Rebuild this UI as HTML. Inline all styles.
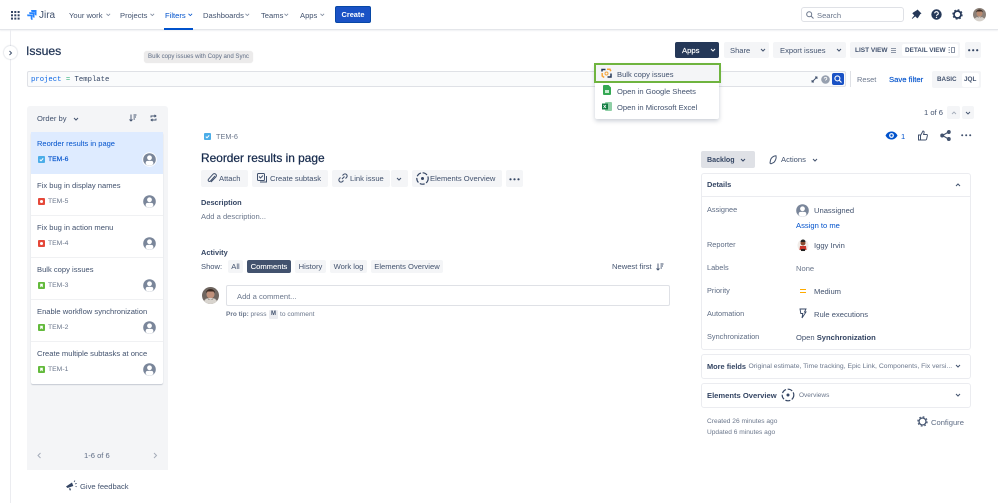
<!DOCTYPE html>
<html><head><meta charset="utf-8"><style>
*{box-sizing:border-box}
html,body{margin:0;padding:0;width:998px;height:503px;overflow:hidden;background:#fff;font-family:"Liberation Sans",sans-serif;color:#42526e;font-size:7.6px}
.t,.b{position:absolute;white-space:nowrap}
.t{line-height:12px;height:12px;margin-top:.7px}
.b{background:#f4f5f7;border-radius:2px}
svg{position:absolute;overflow:visible}
.nav{color:#42526e;font-size:7.6px}
.dk{color:#172b4d}.bl{color:#0052cc}.gr{color:#6b778c}.bd{font-weight:bold;font-size:7.4px}
.lb{font-size:7.35px;color:#5e6c84}
.tm{font-size:6.8px;color:#6b778c}
</style></head><body>
<!-- top nav -->
<div style="position:absolute;left:0;top:0;width:998px;height:30px;border-bottom:1px solid #e4e6ea;box-shadow:0 1px 1px rgba(9,30,66,.06)"></div>
<svg style="left:11px;top:11px" width="9" height="9" fill="#344563"><rect x="0" y="0" width="2" height="2"/><rect x="3.300" y="0" width="2" height="2"/><rect x="6.600" y="0" width="2" height="2"/><rect x="0" y="3.300" width="2" height="2"/><rect x="3.300" y="3.300" width="2" height="2"/><rect x="6.600" y="3.300" width="2" height="2"/><rect x="0" y="6.600" width="2" height="2"/><rect x="3.300" y="6.600" width="2" height="2"/><rect x="6.600" y="6.600" width="2" height="2"/></svg>
<svg style="left:27px;top:10px" width="10" height="10" fill="#2684ff"><path d="M4 0h5.500v5.500a1.800 1.800 0 0 1-1.800-1.600V2H4.500z"/><path d="M2 2.200h5.500v5.500a1.800 1.800 0 0 1-1.800-1.600V4H2.500z"/><path d="M0 4.500h5.500V10a1.800 1.800 0 0 1-1.800-1.600V6.300H.5z"/></svg>
<div class="t" style="left:39px;top:8px;font-size:10px;line-height:13px;color:#42526e">Jira</div>
<div class="t nav" style="left:69px;top:9px">Your work</div>
<div class="t nav" style="left:120px;top:9px">Projects</div>
<div class="t nav bl" style="left:165px;top:9px;color:#0052cc">Filters</div>
<div class="t nav" style="left:203px;top:9px">Dashboards</div>
<div class="t nav" style="left:261px;top:9px">Teams</div>
<div class="t nav" style="left:300px;top:9px">Apps</div>
<svg style="left:0;top:0" width="998" height="30" fill="none" stroke="#7a869a" stroke-width=".8"><path d="M106.500 13.800l1.800 1.800 1.800-1.800M150.500 13.800l1.800 1.800 1.800-1.800"/><path stroke="#0052cc" d="M188.500 13.800l1.800 1.800 1.800-1.800"/><path d="M245.500 13.800l1.800 1.800 1.800-1.800M284.500 13.800l1.800 1.800 1.800-1.800M320.500 13.800l1.800 1.800 1.800-1.800"/></svg>
<div style="position:absolute;left:164px;top:28px;width:29px;height:1.500px;background:#0052cc"></div>
<div style="position:absolute;left:335px;top:6px;width:36px;height:17px;background:#1a52c5;border:1px solid #0747a6;border-radius:2px;color:#fff;font-size:7.400px;font-weight:bold;text-align:center;line-height:15px">Create</div>
<div style="position:absolute;left:801px;top:7px;width:103px;height:15px;border:1px solid #dfe1e6;border-radius:3px"></div>
<svg style="left:806px;top:11px" width="8" height="8" fill="none" stroke="#6b778c" stroke-width="1"><circle cx="3.200" cy="3.200" r="2.500"/><path d="M5 5l2.500 2.500"/></svg>
<div class="t gr" style="left:817px;top:9px">Search</div>
<svg style="left:911px;top:9px" width="11" height="11" fill="#253858"><path d="M6.500 0.500l4 4-1.200.6-2 3.300-1 1-2-2-3 2.500-.5-.5 2.500-3-2-2 1-1 3.300-2z"/></svg>
<svg style="left:931px;top:9px" width="11" height="11"><circle cx="5.500" cy="5.500" r="5.200" fill="#253858"/><path d="M3.700 4.300a1.800 1.600 0 1 1 2.600 1.400c-.6.300-.8.600-.8 1.200" fill="none" stroke="#fff" stroke-width="1.100"/><circle cx="5.500" cy="8.400" r=".7" fill="#fff"/></svg>
<svg style="left:952px;top:9px" width="11" height="11" fill="none" stroke="#253858"><circle cx="5.500" cy="5.500" r="3.500" stroke-width="1.700"/><circle cx="5.500" cy="5.500" r="4.700" stroke-width="1" stroke-dasharray="1.800 1.900"/></svg>
<svg style="left:973px;top:8px" width="13" height="13"><circle cx="6.500" cy="6.500" r="6.500" fill="#8b8078"/><circle cx="6.500" cy="5.500" r="3" fill="#b98a70"/><path d="M3 4.500a3.500 3 0 0 1 7 0L9 3.500H4z" fill="#3b2a22"/><path d="M1.500 11a5.500 4 0 0 1 10 0a6.500 6.500 0 0 1-10 0z" fill="#d5d0ca"/><path d="M4 8a2.500 2 0 0 0 5 0l-1 2H5z" fill="#3b2a22"/></svg>
<!-- left rail -->
<div style="position:absolute;left:10px;top:30px;width:1px;height:473px;background:#ebecf0"></div>
<div style="position:absolute;left:4px;top:46px;width:13px;height:13px;border-radius:50%;background:#fff;box-shadow:0 0 1px 1px rgba(9,30,66,.1)"></div>
<svg style="left:8px;top:49.500px" width="5" height="6" fill="none" stroke="#42526e" stroke-width="1"><path d="M1.500 1l2 2-2 2"/></svg>
<!-- header -->
<div class="t dk" style="left:26px;top:42px;height:17px;line-height:17px;font-size:12.200px;color:#253858;-webkit-text-stroke:.25px #253858">Issues</div>
<div style="position:absolute;left:144px;top:51px;width:109px;height:12px;background:#ecebeb;border-radius:3px;box-shadow:0 0 1px rgba(0,0,0,.1);color:#5e6c84;font-size:6.100px;line-height:12px;text-align:center;white-space:nowrap">Bulk copy issues with Copy and Sync</div>
<div style="position:absolute;left:27px;top:71px;width:819px;height:16px;background:#fafbfc;border:1px solid #dfe1e6;border-radius:2px"></div>
<div class="t" style="left:31px;top:73px;font-family:'Liberation Mono',monospace;font-size:7.250px;color:#344563"><span style="color:#0b66e4">project</span> <span style="color:#36b37e">=</span> Template</div>
<svg style="left:811px;top:76px" width="7" height="7" fill="none" stroke="#42526e" stroke-width=".9"><path d="M1 6l5-5M4 1h2v2M1 4v2h2"/></svg>
<svg style="left:821px;top:75px" width="9" height="9"><circle cx="4.500" cy="4.500" r="4.300" fill="#97a0af"/><path d="M3.200 3.600a1.300 1.200 0 1 1 1.900 1c-.4.200-.6.500-.6.900" fill="none" stroke="#fff" stroke-width=".8"/></svg>
<div style="position:absolute;left:832px;top:73px;width:12px;height:12px;background:#1a52c5;border-radius:2px"></div>
<svg style="left:834px;top:75px" width="8" height="8" fill="none" stroke="#fff" stroke-width="1.100"><circle cx="3.400" cy="3.400" r="2.500"/><path d="M5.200 5.200l2.300 2.300"/></svg>
<div style="position:absolute;left:850px;top:71px;width:1px;height:16px;background:#dfe1e6"></div>
<div class="t gr" style="left:857px;top:73px;font-size:7.400px">Reset</div>
<div class="t bl" style="left:889px;top:73px;font-size:7.700px;-webkit-text-stroke:.15px #0052cc">Save filter</div>
<div class="b" style="left:932px;top:71px;width:49px;height:17px"></div>
<div class="t" style="left:937px;top:73px;font-size:6.300px;font-weight:bold;color:#42526e">BASIC</div>
<div style="position:absolute;left:962px;top:72.500px;width:17px;height:14px;background:#fff;border-radius:2px"></div>
<div class="t" style="left:964px;top:73px;font-size:6.400px;font-weight:bold;color:#42526e">JQL</div>
<!-- toolbar -->
<div style="position:absolute;left:675px;top:42px;width:44px;height:16px;background:#253858;border-radius:2px"></div>
<div class="t" style="left:682px;top:44px;color:#fff;font-size:7.700px;-webkit-text-stroke:.15px #fff">Apps</div>
<svg style="left:710px;top:48px" width="6" height="4" fill="none" stroke="#fff" stroke-width="1"><path d="M1 1l2 2 2-2"/></svg>
<div class="b" style="left:724px;top:42px;width:45px;height:16px"></div>
<div class="t" style="left:730px;top:44px">Share</div>
<svg style="left:760px;top:48px" width="6" height="4" fill="none" stroke="#42526e" stroke-width="1"><path d="M1 1l2 2 2-2"/></svg>
<div class="b" style="left:773px;top:42px;width:73px;height:16px"></div>
<div class="t" style="left:780px;top:44px">Export issues</div>
<svg style="left:836px;top:48px" width="6" height="4" fill="none" stroke="#42526e" stroke-width="1"><path d="M1 1l2 2 2-2"/></svg>
<div class="b" style="left:850px;top:42px;width:110px;height:16px"></div>
<div style="position:absolute;left:902px;top:44px;width:56px;height:12px;background:#fff;border-radius:2px"></div>
<div class="t" style="left:855px;top:44px;font-size:6.500px;font-weight:bold;color:#42526e">LIST VIEW</div>
<svg style="left:891px;top:47.500px" width="6" height="5" stroke="#6b778c" stroke-width=".8"><path d="M0 .5h5M0 2.500h5M0 4.500h5"/></svg>
<div class="t" style="left:905px;top:44px;font-size:6.400px;font-weight:bold;color:#42526e">DETAIL VIEW</div>
<svg style="left:948px;top:46.500px" width="7" height="7" fill="none" stroke="#6b778c" stroke-width=".8"><path d="M.5.500h1.500M.5 3h1.500M.5 5.500h1.500M3.500.500h3v5h-3z"/></svg>
<div class="b" style="left:965px;top:42px;width:16px;height:16px"></div>
<svg style="left:968px;top:49px" width="11" height="3" fill="#344563"><circle cx="1.200" cy="1.200" r="1.100"/><circle cx="5.200" cy="1.200" r="1.100"/><circle cx="9.200" cy="1.200" r="1.100"/></svg>
<!-- dropdown -->
<div style="position:absolute;left:595px;top:64px;width:124px;height:55px;background:#fff;border-radius:2px;box-shadow:0 2px 5px rgba(9,30,66,.22)"></div>
<div style="position:absolute;left:594px;top:63px;width:127px;height:20px;background:#f4f5f7;border:2px solid #6fb43f"></div>
<svg style="left:601px;top:68px" width="11" height="11" fill="none" stroke-width="1.500"><path d="M1 3.500V1.500h3.500" stroke="#253858"/><path d="M6 1.200h3l.8 2" stroke="#f5a63c"/><path d="M1.200 5v3l2 1.500" stroke="#f5a63c"/><path d="M10 5.500v3.500H6.500" stroke="#253858"/><circle cx="5.500" cy="5.500" r="1.500" stroke="#f5a63c" stroke-width="1"/></svg>
<div class="t" style="left:617px;top:68px;color:#42526e">Bulk copy issues</div>
<svg style="left:603px;top:85px" width="8" height="10"><path d="M0 1a1 1 0 0 1 1-1h4.500L8 2.500V9a1 1 0 0 1-1 1H1a1 1 0 0 1-1-1z" fill="#34a853"/><rect x="2" y="5" width="4" height="3" fill="#c8ecd2"/></svg>
<div class="t" style="left:617px;top:85px;color:#42526e">Open in Google Sheets</div>
<svg style="left:602px;top:102px" width="10" height="9"><rect x="3" y="0" width="7" height="9" rx="1" fill="#8fcfa6"/><rect x="0" y="1.500" width="6" height="6" fill="#107c41"/><path d="M1.500 3l2.500 3M4 3L1.500 6" stroke="#fff" stroke-width=".7"/></svg>
<div class="t" style="left:617px;top:101px;color:#42526e">Open in Microsoft Excel</div>
<!-- pagination -->
<div class="t" style="left:924px;top:106px">1 of 6</div>
<div class="b" style="left:947px;top:106px;width:13px;height:13px"></div>
<svg style="left:951px;top:111px" width="6" height="4" fill="none" stroke="#a5adba" stroke-width=".9"><path d="M1 3l2-2 2 2"/></svg>
<div class="b" style="left:962px;top:106px;width:12px;height:13px"></div>
<svg style="left:965px;top:111px" width="6" height="4" fill="none" stroke="#42526e" stroke-width=".9"><path d="M1 1l2 2 2-2"/></svg>
<!-- left panel -->
<div style="position:absolute;left:27px;top:106px;width:141px;height:364px;background:#f4f5f7;border-radius:3px 3px 0 0"></div>
<div class="t" style="left:37px;top:112.500px;color:#42526e">Order by</div>
<svg style="left:72.500px;top:117px" width="6" height="4" fill="none" stroke="#42526e" stroke-width="1"><path d="M1 1l2 2 2-2"/></svg>
<svg style="left:129px;top:114px" width="8" height="8" fill="none" stroke="#42526e" stroke-width=".9"><path d="M2 .5v6.500M.5 5.500L2 7l1.500-1.500M4.500 1h3M4.500 3h2.500M4.500 5h1.500"/></svg>
<svg style="left:150px;top:114px" width="7" height="8" fill="none" stroke="#42526e" stroke-width=".9"><path d="M1 3.500V2h4.500M4.500.800L6 2 4.500 3.200M6 4.500V6H1.500M2.500 4.800L1 6l1.500 1.200"/></svg>
<div style="position:absolute;left:31px;top:132px;width:132px;height:252px;background:#fff;border-radius:2px;box-shadow:0 1px 1px rgba(9,30,66,.2)"></div>
<div style="position:absolute;left:31px;top:132px;width:132px;height:42px;background:#deebff"></div>
<div class="t" style="left:37px;top:137px;color:#0052cc;font-size:7.500px">Reorder results in page</div>
<div class="t" style="left:37px;top:179px;color:#42526e">Fix bug in display names</div>
<div class="t" style="left:37px;top:221px;color:#42526e">Fix bug in action menu</div>
<div class="t" style="left:37px;top:263px;color:#42526e">Bulk copy issues</div>
<div class="t" style="left:37px;top:305px;color:#42526e">Enable workflow synchronization</div>
<div class="t" style="left:37px;top:347px;color:#42526e">Create multiple subtasks at once</div>
<div style="position:absolute;left:31px;top:215px;width:132px;height:1px;background:#f0f1f3"></div>
<div style="position:absolute;left:31px;top:257px;width:132px;height:1px;background:#f0f1f3"></div>
<div style="position:absolute;left:31px;top:299px;width:132px;height:1px;background:#f0f1f3"></div>
<div style="position:absolute;left:31px;top:341px;width:132px;height:1px;background:#f0f1f3"></div>
<!-- issue types -->
<svg style="left:38px;top:156px" width="7" height="7"><rect width="7" height="7" rx="1" fill="#4bade8"/><path d="M1.800 3.600l1.200 1.200 2.200-2.400" stroke="#fff" fill="none" stroke-width="1"/></svg>
<svg style="left:38px;top:198px" width="7" height="7"><rect width="7" height="7" rx="1" fill="#e5493a"/><circle cx="3.500" cy="3.500" r="1.500" fill="#fff"/></svg>
<svg style="left:38px;top:240px" width="7" height="7"><rect width="7" height="7" rx="1" fill="#e5493a"/><circle cx="3.500" cy="3.500" r="1.500" fill="#fff"/></svg>
<svg style="left:38px;top:282px" width="7" height="7"><rect width="7" height="7" rx="1" fill="#63ba3c"/><path d="M2.200 1.700h2.600v3.700L3.500 4.300 2.200 5.400z" fill="#fff"/></svg>
<svg style="left:38px;top:324px" width="7" height="7"><rect width="7" height="7" rx="1" fill="#63ba3c"/><path d="M2.200 1.700h2.600v3.700L3.500 4.300 2.200 5.400z" fill="#fff"/></svg>
<svg style="left:38px;top:366px" width="7" height="7"><rect width="7" height="7" rx="1" fill="#63ba3c"/><path d="M2.200 1.700h2.600v3.700L3.500 4.300 2.200 5.400z" fill="#fff"/></svg>
<div class="t tm" style="left:48px;top:153.500px;color:#0052cc;-webkit-text-stroke:.15px #0052cc">TEM-6</div>
<div class="t tm" style="left:48px;top:195.500px">TEM-5</div>
<div class="t tm" style="left:48px;top:237.500px">TEM-4</div>
<div class="t tm" style="left:48px;top:279.500px">TEM-3</div>
<div class="t tm" style="left:48px;top:321.500px">TEM-2</div>
<div class="t tm" style="left:48px;top:363.500px">TEM-1</div>
<!-- avatars -->
<svg width="0" height="0"><defs><g id="av"><circle cx="6.500" cy="6.500" r="6.300" fill="#7a869a"/><circle cx="6.500" cy="4.800" r="2.400" fill="#fff"/><path d="M2.700 11v-1.500a2 2 0 0 1 2-1.600h3.600a2 2 0 0 1 2 1.600V11a5 5 0 0 1-7.600 0z" fill="#fff"/></g></defs></svg>
<svg style="left:143px;top:153px" width="13" height="13"><circle cx="6.500" cy="6.500" r="7.300" fill="#fff"/><use href="#av"/></svg>
<svg style="left:143px;top:195px" width="13" height="13"><use href="#av"/></svg>
<svg style="left:143px;top:237px" width="13" height="13"><use href="#av"/></svg>
<svg style="left:143px;top:279px" width="13" height="13"><use href="#av"/></svg>
<svg style="left:143px;top:321px" width="13" height="13"><use href="#av"/></svg>
<svg style="left:143px;top:363px" width="13" height="13"><use href="#av"/></svg>
<svg style="left:37px;top:452px" width="5" height="7" fill="none" stroke="#a5adba" stroke-width="1"><path d="M3.500 1L1 3.500 3.500 6"/></svg>
<div class="t" style="left:84px;top:449px;color:#5e6c84">1-6 of 6</div>
<svg style="left:153px;top:452px" width="5" height="7" fill="none" stroke="#a5adba" stroke-width="1"><path d="M1 1l2.500 2.500L1 6"/></svg>
<svg style="left:66px;top:480px" width="11" height="11" fill="#344563"><path d="M0 6.500l6-4 1.300 3.500-5.800 2z"/><path d="M3 8.500l1.300-.4.700 2-1.200.4z"/><path d="M8 2l1-1.500M9 4l1.800-.7M9.500 6.500l1.300.3" stroke="#344563" stroke-width=".7"/></svg>
<div class="t" style="left:80px;top:480px;color:#42526e">Give feedback</div>
<!-- middle -->
<svg style="left:204px;top:133px" width="7" height="7"><rect width="7" height="7" rx="1" fill="#4bade8"/><path d="M1.800 3.600l1.200 1.200 2.200-2.400" stroke="#fff" fill="none" stroke-width="1"/></svg>
<div class="t" style="left:216px;top:130px;color:#6b778c;font-size:7.300px">TEM-6</div>
<div class="t" style="left:201px;top:148px;height:18px;line-height:18px;font-size:11.900px;color:#172b4d;-webkit-text-stroke:.25px #172b4d">Reorder results in page</div>
<div class="b" style="left:201px;top:170px;width:47px;height:17px"></div>
<svg style="left:207px;top:173px" width="10" height="11" fill="none" stroke="#42526e" stroke-width="1"><path d="M8 3L3.500 8a1.300 1.300 0 0 1-2-1.800l4.500-5a2 2 0 0 1 3 2.600L4 9"/></svg>
<div class="t" style="left:219px;top:172px">Attach</div>
<div class="b" style="left:252px;top:170px;width:76px;height:17px"></div>
<svg style="left:257px;top:173px" width="11" height="10" fill="none" stroke="#42526e" stroke-width="1"><rect x=".5" y=".5" width="7" height="7" rx="1"/><path d="M2 3.500l1.500 1.500L6 2.500M9.500 3v6H3"/></svg>
<div class="t" style="left:270px;top:172px">Create subtask</div>
<div class="b" style="left:332px;top:170px;width:58px;height:17px"></div>
<svg style="left:338px;top:173px" width="10" height="10" fill="none" stroke="#42526e" stroke-width="1.100"><path d="M4 6L6.500 3.500M4.500 2.500l1-1a2.100 2.100 0 0 1 3 3l-1 1M5.500 7.500l-1 1a2.100 2.100 0 0 1-3-3l1-1"/></svg>
<div class="t" style="left:350px;top:172px">Link issue</div>
<div class="b" style="left:391px;top:170px;width:17px;height:17px"></div>
<svg style="left:396px;top:177px" width="6" height="4" fill="none" stroke="#42526e" stroke-width="1"><path d="M1 1l2 2 2-2"/></svg>
<div class="b" style="left:412px;top:170px;width:90px;height:17px"></div>
<svg style="left:416px;top:172px" width="13" height="13" fill="none"><circle cx="6.500" cy="6.500" r="5.700" stroke="#344563" stroke-width="1.200" stroke-dasharray="5 1.700"/><circle cx="6.500" cy="6.500" r="1.500" fill="#344563"/></svg>
<div class="t" style="left:430px;top:172px">Elements Overview</div>
<div class="b" style="left:506px;top:170px;width:17px;height:17px"></div>
<svg style="left:509px;top:177.500px" width="11" height="3" fill="#344563"><circle cx="1.500" cy="1.300" r="1.100"/><circle cx="5.500" cy="1.300" r="1.100"/><circle cx="9.500" cy="1.300" r="1.100"/></svg>
<div class="t bd" style="left:201px;top:196px;color:#344563">Description</div>
<div class="t gr" style="left:201px;top:210px">Add a description...</div>
<div class="t bd" style="left:201px;top:246px;color:#344563">Activity</div>
<div class="t" style="left:201px;top:260px">Show:</div>
<div class="b" style="left:228px;top:260px;width:15px;height:13px;text-align:center;line-height:13px">All</div>
<div class="b" style="left:247px;top:260px;width:44px;height:13px;background:#42526e;color:#fff;text-align:center;line-height:13px;-webkit-text-stroke:.1px #fff">Comments</div>
<div class="b" style="left:295px;top:260px;width:31px;height:13px;text-align:center;line-height:13px">History</div>
<div class="b" style="left:330px;top:260px;width:37px;height:13px;text-align:center;line-height:13px">Work log</div>
<div class="b" style="left:371px;top:260px;width:72px;height:13px;text-align:center;line-height:13px">Elements Overview</div>
<div class="t" style="left:612px;top:260px">Newest first</div>
<svg style="left:656px;top:263px" width="8" height="8" fill="none" stroke="#42526e" stroke-width=".9"><path d="M2 .5v6.500M.5 5.500L2 7l1.500-1.500M4.500 1h3M4.500 3h2.500M4.500 5h1.500"/></svg>
<svg style="left:202px;top:287px" width="17" height="17"><circle cx="8.500" cy="8.500" r="8.500" fill="#6f6660"/><circle cx="8.500" cy="7.500" r="4" fill="#c0907a"/><path d="M4 6a4.500 4 0 0 1 9 0l-1.500-1.500h-6z" fill="#3b2a22"/><path d="M2 14a7 5 0 0 1 13 0a8.500 8.500 0 0 1-13 0z" fill="#d8d4ce"/><path d="M5.500 10a3 2.500 0 0 0 6 0l-1 2.500h-4z" fill="#3b2a22"/></svg>
<div style="position:absolute;left:226px;top:285px;width:444px;height:21px;border:1px solid #dfe1e6;border-radius:2px"></div>
<div class="t gr" style="left:237px;top:290px">Add a comment...</div>
<div class="t gr" style="left:226px;top:308px;font-size:6.500px"><b>Pro tip:</b> press</div>
<div style="position:absolute;left:269px;top:310px;width:9px;height:9px;background:#ebecf0;border-radius:1px;font-size:6px;font-weight:bold;text-align:center;line-height:9px;color:#42526e">M</div>
<div class="t gr" style="left:280px;top:308px;font-size:6.600px">to comment</div>
<!-- right -->
<svg style="left:885px;top:131px" width="13" height="9"><path d="M.5 4.500C2 1.700 4 .5 6.500.5s4.500 1.200 6 4c-1.500 2.800-3.500 4-6 4s-4.500-1.200-6-4z" fill="#0052cc"/><circle cx="6.500" cy="4.500" r="2.400" fill="#fff"/><circle cx="6.500" cy="4.500" r="1.200" fill="#0052cc"/></svg>
<div class="t bl" style="left:901px;top:130px">1</div>
<svg style="left:918px;top:130px" width="10" height="11" fill="none" stroke="#42526e" stroke-width="1"><path d="M.5 5h2v5h-2zM2.500 5.500L5 1c1 0 1.300.800 1 2l-.4 1.500h3c.6 0 .9.500.8 1l-.8 3.500c-.1.500-.5 1-1 1H2.500"/></svg>
<svg style="left:940px;top:130px" width="11" height="11" fill="none" stroke="#42526e" stroke-width="1.100"><path d="M8.500 2L2.500 5.500l6 3.500"/><circle cx="8.800" cy="2" r="1.400" fill="#42526e"/><circle cx="2.200" cy="5.500" r="1.400" fill="#42526e"/><circle cx="8.800" cy="9" r="1.400" fill="#42526e"/></svg>
<svg style="left:961px;top:134px" width="11" height="3" fill="#42526e"><circle cx="1.200" cy="1.200" r="1"/><circle cx="5.200" cy="1.200" r="1"/><circle cx="9.200" cy="1.200" r="1"/></svg>
<div class="b" style="left:701px;top:151px;width:54px;height:17px;background:#dfe1e6"></div>
<div class="t bd" style="left:707px;top:153.500px;color:#344563;font-size:7.100px">Backlog</div>
<svg style="left:740px;top:158px" width="6" height="4" fill="none" stroke="#344563" stroke-width="1"><path d="M1 1l2 2 2-2"/></svg>
<svg style="left:768px;top:155px" width="9" height="10" fill="none" stroke="#42526e" stroke-width="1"><path d="M8 .8C5.500 1 3 2.500 2.500 5L2 8l1 .8 3-1.500C7.500 5.500 8.500 3 8 .8z"/></svg>
<div class="t" style="left:781px;top:153.500px">Actions</div>
<svg style="left:812px;top:158px" width="6" height="4" fill="none" stroke="#42526e" stroke-width="1"><path d="M1 1l2 2 2-2"/></svg>
<div style="position:absolute;left:701px;top:173px;width:270px;height:177px;border:1px solid #ebecf0;border-radius:3px"></div>
<div style="position:absolute;left:701px;top:196px;width:270px;height:1px;background:#ebecf0"></div>
<div class="t bd" style="left:707px;top:178.500px;color:#344563">Details</div>
<svg style="left:955px;top:183px" width="6" height="4" fill="none" stroke="#42526e" stroke-width="1"><path d="M1 3l2-2 2 2"/></svg>
<div class="t lb" style="left:707px;top:203.500px">Assignee</div>
<div class="t lb" style="left:707px;top:238.500px">Reporter</div>
<div class="t lb" style="left:707px;top:261.500px">Labels</div>
<div class="t lb" style="left:707px;top:284.500px">Priority</div>
<div class="t lb" style="left:707px;top:307.500px">Automation</div>
<div class="t lb" style="left:707px;top:330.500px">Synchronization</div>
<svg style="left:796px;top:204px" width="13" height="13"><use href="#av"/></svg>
<div class="t" style="left:814px;top:204px">Unassigned</div>
<div class="t bl" style="left:796px;top:219px">Assign to me</div>
<svg style="left:797px;top:239px" width="12" height="13"><ellipse cx="6" cy="6.500" rx="5.500" ry="6" fill="#f1ece8"/><circle cx="6" cy="4" r="2.500" fill="#8a4b30"/><path d="M3.500 3a2.500 2.500 0 0 1 5 0z" fill="#222"/><path d="M3 7h6l.5 4h-7z" fill="#c9372c"/><rect x="4" y="10" width="4" height="2" fill="#222"/></svg>
<div class="t" style="left:814px;top:239px">Iggy Irvin</div>
<div class="t gr" style="left:796px;top:262px">None</div>
<div style="position:absolute;left:800px;top:288.500px;width:6px;height:1.300px;background:#ffab00"></div>
<div style="position:absolute;left:800px;top:292px;width:6px;height:1.300px;background:#ffab00"></div>
<div class="t" style="left:814px;top:285px">Medium</div>
<svg style="left:799px;top:308px" width="8" height="11" fill="none" stroke="#344563" stroke-width=".9"><path d="M1 1h6L5.500 4H7L3 10l.8-4.500H1.800z"/></svg>
<div class="t" style="left:814px;top:308px">Rule executions</div>
<div class="t" style="left:796px;top:331px">Open <b style="color:#344563">Synchronization</b></div>
<div style="position:absolute;left:701px;top:354px;width:270px;height:25px;border:1px solid #ebecf0;border-radius:3px"></div>
<div class="t bd" style="left:707px;top:360px;color:#344563">More fields</div>
<div class="t gr" style="left:748.500px;top:360px;font-size:6.800px">Original estimate, Time tracking, Epic Link, Components, Fix versi...</div>
<svg style="left:955px;top:364px" width="6" height="4" fill="none" stroke="#42526e" stroke-width="1"><path d="M1 1l2 2 2-2"/></svg>
<div style="position:absolute;left:701px;top:383px;width:270px;height:25px;border:1px solid #ebecf0;border-radius:3px"></div>
<div class="t bd" style="left:707px;top:389px;color:#344563;font-size:7.600px">Elements Overview</div>
<svg style="left:781px;top:388px" width="14" height="14" fill="none"><circle cx="7" cy="7" r="5.800" stroke="#344563" stroke-width="1.200" stroke-dasharray="5 1.700"/><circle cx="7" cy="7" r="1.500" fill="#344563"/></svg>
<div class="t gr" style="left:799px;top:389px;font-size:6.500px">Overviews</div>
<svg style="left:955px;top:393px" width="6" height="4" fill="none" stroke="#42526e" stroke-width="1"><path d="M1 1l2 2 2-2"/></svg>
<div class="t gr" style="left:707px;top:415px;font-size:6.600px">Created 26 minutes ago</div>
<div class="t gr" style="left:707px;top:426.500px;font-size:6.600px">Updated 6 minutes ago</div>
<svg style="left:917px;top:416px" width="11" height="11" fill="none" stroke="#42526e"><circle cx="5.500" cy="5.500" r="3.500" stroke-width="1.300"/><circle cx="5.500" cy="5.500" r="4.700" stroke-width="1" stroke-dasharray="1.800 1.900"/></svg>
<div class="t" style="left:931px;top:416px;color:#5e6c84">Configure</div>
</body></html>
